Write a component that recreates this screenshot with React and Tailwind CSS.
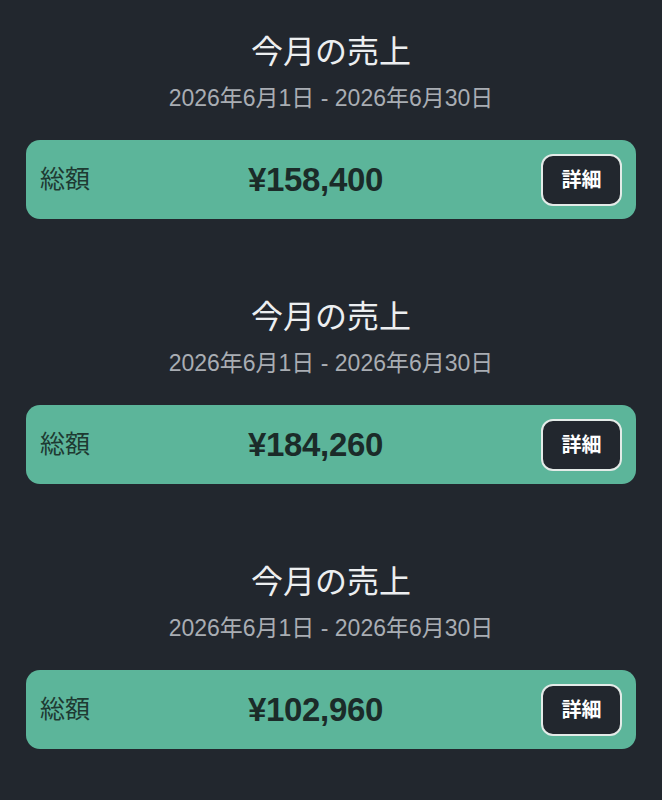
const sales = [
  { id: 1, total: '¥158,400' },
  { id: 2, total: '¥184,260' },
  { id: 3, total: '¥102,960' },
]

const font = { fontFamily: '"Liberation Sans", "Noto Sans CJK JP", sans-serif' }

const SalesCard = ({ total }) => {
  return (
    <section className="flex flex-col">
      <h2 className="text-center text-[32px] leading-[40px] text-[#eceef0]">今月の売上</h2>
      <p className="mt-[11px] text-center text-[23px] leading-[30px] text-[#a9adb3]">
        2026年6月1日 - 2026年6月30日
      </p>

      <div className="mt-[27px] h-[79px] flex items-center justify-between px-[14px] rounded-[14px] bg-[#5cb59a]">
        <span className="text-[25px] text-[#1e3a32]">総額</span>
        <span className="text-[33px] font-bold tracking-[-0.3px] text-[#1b2b29]">{total}</span>
        <button
          type="button"
          className="w-[81px] h-[52px] rounded-[12px] border-2 border-[#e4ebe8] bg-[#22272e] text-[20px] font-bold text-white"
        >詳細</button>
      </div>
    </section>
  )
}

const App = () => {
  return (
    <div style={font} className="min-h-[800px] bg-[#22272e] px-[26px] pt-[32px]">
      <div className="flex flex-col gap-[78px]">
        {sales.map(s => (
          <SalesCard key={s.id} total={s.total} />
        ))}
      </div>
    </div>
  )
}

export default App
